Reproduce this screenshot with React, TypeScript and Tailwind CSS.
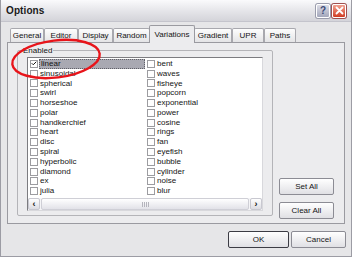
import { Check } from 'lucide-react';

// XP "silver" Options dialog, Variations tab, with a red hand-drawn ring
// round the first (selected) list entry.

const LEFT = [
  'linear',
  'sinusoidal',
  'spherical',
  'swirl',
  'horseshoe',
  'polar',
  'handkerchief',
  'heart',
  'disc',
  'spiral',
  'hyperbolic',
  'diamond',
  'ex',
  'julia',
];

const RIGHT = [
  'bent',
  'waves',
  'fisheye',
  'popcorn',
  'exponential',
  'power',
  'cosine',
  'rings',
  'fan',
  'eyefish',
  'bubble',
  'cylinder',
  'noise',
  'blur',
];

const TABS = [
  { label: 'General', w: 'w-[34px]' },
  { label: 'Editor', w: 'w-[34px]' },
  { label: 'Display', w: 'w-[35px]' },
  { label: 'Random', w: 'w-[37px]' },
  { label: 'Variations', w: 'w-[46px]', active: true },
  { label: 'Gradient', w: 'w-[38px]' },
  { label: 'UPR', w: 'w-[32px]' },
  { label: 'Paths', w: 'w-[32px]' },
];

export default function App() {
  return (
    <div className="relative flex h-[257px] w-[352px] flex-col overflow-hidden border-x border-b border-[#9c9ca4] bg-[#e6e6e8] font-['Liberation_Sans',Arial,sans-serif] text-[8px] text-[#141414]">
      <TitleBar />

      {/* tab strip */}
      <div className="mt-[3px] flex h-[17px] items-end pl-[9px]">
        {TABS.map((t) => (
          <Tab key={t.label} label={t.label} width={t.w} active={t.active} />
        ))}
      </div>

      {/* tab page */}
      <div className="mx-[6px] flex h-[182px] border border-[#9a9aa0] bg-[#ececee] pl-[9px] pr-[10px]">
        <GroupBox />
        <div className="ml-[6px] flex w-[55px] flex-col justify-end gap-[7px] pb-[4px]">
          <Button label="Set All" />
          <Button label="Clear All" />
        </div>
      </div>

      <div className="mt-[7px] flex justify-end gap-[2px] pr-[5px]">
        <Button label="OK" wide primary />
        <Button label="Cancel" />
      </div>

      <svg
        className="pointer-events-none absolute left-0 top-0"
        width="352"
        height="257"
      >
        <ellipse
          cx="55"
          cy="59"
          rx="44"
          ry="18.5"
          transform="rotate(-7 55 59)"
          fill="none"
          stroke="#e8141a"
          strokeWidth="2.4"
        />
      </svg>
    </div>
  );
}

function TitleBar() {
  return (
    <div className="flex h-[22px] items-center justify-between border-b border-[#c4c4cc] bg-gradient-to-b from-[#fafafc] via-[#e6e6ea] to-[#d4d4da] pl-[5px] pr-[5px]">
      <span className="text-[10px] font-bold tracking-[0.1px] text-[#1a1a1a]">
        Options
      </span>
      <div className="flex gap-[2px]">
        <div className="flex h-[14px] w-[14px] items-center justify-center rounded-[2px] border border-white bg-gradient-to-b from-[#dcdce6] to-[#a4a8bc] text-[10px] font-bold leading-none text-[#3c4a78] shadow-[0_0_0_1px_#9a9cac]">
          ?
        </div>
        <div className="flex h-[14px] w-[14px] items-center justify-center rounded-[2px] border border-white bg-gradient-to-b from-[#f0a090] to-[#d03a20] shadow-[0_0_0_1px_#a05050]">
          <svg width="9" height="9" viewBox="0 0 9 9">
            <path
              d="M1.5 1.5 L7.5 7.5 M7.5 1.5 L1.5 7.5"
              stroke="white"
              strokeWidth="1.8"
              strokeLinecap="round"
            />
          </svg>
        </div>
      </div>
    </div>
  );
}

function Tab({
  label,
  width,
  active,
}: {
  label: string;
  width: string;
  active?: boolean;
}) {
  if (active) {
    return (
      <div
        className={`relative z-10 -mb-px -mx-[1px] flex h-[18px] ${width} items-start justify-center rounded-t-[2px] border-x border-t border-[#9a9aa0] bg-[#ececee] pt-[3px]`}
      >
        {label}
      </div>
    );
  }
  return (
    <div
      className={`flex h-[14px] ${width} items-center justify-center rounded-t-[2px] border-x border-t border-[#a8a8ae] bg-gradient-to-b from-[#fdfdfd] to-[#e4e4e6]`}
    >
      {label}
    </div>
  );
}

function GroupBox() {
  return (
    <div className="relative mt-[7px] h-[166px] w-[256px] rounded-[2px] border border-[#b4b4b8] pl-[9px] pt-[6px]">
      <span className="absolute -top-[5px] left-[4px] bg-[#ececee] px-px leading-[9px]">
        Enabled
      </span>
      <div className="flex h-[154px] w-[236px] flex-col border border-t-[#7c7c80] border-l-[#7c7c80] border-r-[#d8d8dc] border-b-[#d8d8dc] bg-white">
        <div className="flex flex-1 pt-px">
          <Column items={LEFT} selected="linear" checked="linear" />
          <Column items={RIGHT} />
        </div>
        <ScrollBar />
      </div>
    </div>
  );
}

function Column({
  items,
  selected,
  checked,
}: {
  items: string[];
  selected?: string;
  checked?: string;
}) {
  return (
    <div className="flex w-[117px] flex-col">
      {items.map((it) => (
        <div key={it} className="flex h-[9.8px] items-center">
          <div className="ml-[2px] flex h-[8px] w-[8px] items-center justify-center border border-[#9c9ca0] bg-white">
            {checked === it && (
              <Check className="h-[7px] w-[7px]" strokeWidth={4} />
            )}
          </div>
          <div
            className={`ml-px flex h-full flex-1 items-center pl-px ${
              selected === it
                ? 'border border-dotted border-[#606068] bg-[#a9a9b2]'
                : ''
            }`}
          >
            {it}
          </div>
        </div>
      ))}
    </div>
  );
}

function ScrollBar() {
  return (
    <div className="flex h-[12px] bg-[#f4f4f6]">
      <div className="flex w-[12px] items-center justify-center rounded-[2px] border border-[#c8c8d0] bg-gradient-to-b from-white to-[#dcdce2] text-[9px] font-bold leading-none">
        ‹
      </div>
      <div className="mx-px flex flex-1 items-center justify-center rounded-[2px] border border-[#cfcfd6] bg-gradient-to-b from-white to-[#e2e2e8]">
        <div className="flex gap-px">
          <div className="h-[5px] w-px bg-[#b4b4bc]" />
          <div className="h-[5px] w-px bg-[#b4b4bc]" />
          <div className="h-[5px] w-px bg-[#b4b4bc]" />
          <div className="h-[5px] w-px bg-[#b4b4bc]" />
        </div>
      </div>
      <div className="flex w-[12px] items-center justify-center rounded-[2px] border border-[#c8c8d0] bg-gradient-to-b from-white to-[#dcdce2] text-[9px] font-bold leading-none">
        ›
      </div>
    </div>
  );
}

function Button({
  label,
  wide,
  primary,
}: {
  label: string;
  wide?: boolean;
  primary?: boolean;
}) {
  return (
    <div
      className={`flex h-[17px] ${wide ? 'w-[61px]' : 'w-[55px]'} items-center justify-center rounded-[2px] border ${
        primary ? 'border-[#3c3c44]' : 'border-[#8c8c94]'
      } bg-gradient-to-b from-white to-[#e0e0e4] text-[8px]`}
    >
      {label}
    </div>
  );
}
